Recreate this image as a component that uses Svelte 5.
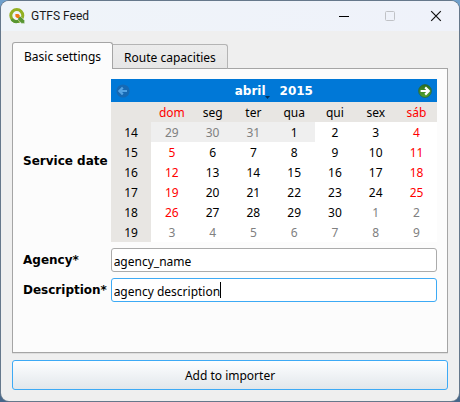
<script>
  const weekdays = ['dom', 'seg', 'ter', 'qua', 'qui', 'sex', 'sáb'];
  const firstWeek = 14;
  const start = new Date(2015, 2, 29);
  const weeks = Array.from({ length: 6 }, (_, w) => ({
    number: firstWeek + w,
    days: Array.from({ length: 7 }, (_, d) => {
      const date = new Date(start.getFullYear(), start.getMonth(), start.getDate() + w * 7 + d);
      return {
        day: date.getDate(),
        outside: date.getMonth() !== 3,
        weekend: d === 0 || d === 6,
        disabled: w === 0 && d < 4
      };
    })
  }));

  let tab = $state('basic');
  let agency = $state('agency_name');
  let description = $state('agency description');
</script>

<div class="desktop">
  <div class="window">
    <header class="titlebar">
      <svg class="logo" viewBox="0 0 16 16" aria-hidden="true">
        <circle cx="7.8" cy="7.6" r="6" fill="none" stroke="#93b023" stroke-width="3" />
        <path d="M2.7 11A6 6 0 0 0 9.5 13.3" fill="none" stroke="#589632" stroke-width="3" />
        <path d="M9.2 8.6h2.6l3.8 3.8v3h-3l-3.8-3.8z" fill="#589632" stroke="#f0f4f9" stroke-width=".5" />
        <path d="M6.4 6h3l1.6 1.7-1.2 2.2H8L6.4 8.6z" fill="#ee7913" />
      </svg>
      <span class="title">GTFS Feed</span>
      <button class="caption" aria-label="Minimize">
        <svg viewBox="0 0 12 12"><path d="M1 6.5h10" stroke="#000" /></svg>
      </button>
      <button class="caption" aria-label="Maximize" disabled>
        <svg viewBox="0 0 12 12"><rect x="1.5" y="1.5" width="9" height="9" rx="1" fill="none" stroke="#c0c2c6" /></svg>
      </button>
      <button class="caption" aria-label="Close">
        <svg viewBox="0 0 12 12"><path d="M1.2 1.2l9.6 9.6M10.8 1.2l-9.6 9.6" stroke="#111" stroke-width="1.2" /></svg>
      </button>
    </header>

    <main>
      <div class="tabs" role="tablist">
        <button class="tab" class:active={tab === 'basic'} role="tab" aria-selected={tab === 'basic'} onclick={() => (tab = 'basic')}>Basic settings</button>
        <button class="tab" class:active={tab === 'routes'} role="tab" aria-selected={tab === 'routes'} onclick={() => (tab = 'routes')}>Route capacities</button>
      </div>

      <div class="panel" role="tabpanel">
        {#if tab === 'basic'}
          <div class="form">
            <span class="label" id="service-date">Service date</span>
            <div class="calendar" role="group" aria-labelledby="service-date">
              <div class="nav">
                <button class="arrow" aria-label="Previous month">
                  <svg viewBox="0 0 14 14">
                    <circle cx="7" cy="7" r="6.6" fill="#1669b4" />
                    <path d="M11 7H4M6.8 3.6L3.4 7l3.4 3.4" fill="none" stroke="#54a3e4" stroke-width="2.2" />
                  </svg>
                </button>
                <div class="period">
                  <button class="month" aria-haspopup="menu">abril<svg class="drop" viewBox="0 0 5 3"><path d="M0 0h5L2.5 3z" fill="#06345f" /></svg></button>
                  <button>2015</button>
                </div>
                <button class="arrow" aria-label="Next month">
                  <svg viewBox="0 0 14 14">
                    <defs>
                      <linearGradient id="green" x1="0" y1="0" x2="0" y2="1">
                        <stop offset="0" stop-color="#2c6e20" />
                        <stop offset="1" stop-color="#55a52f" />
                      </linearGradient>
                    </defs>
                    <circle cx="7" cy="7" r="6.4" fill="url(#green)" stroke="#2b6330" stroke-width=".7" />
                    <path d="M2.6 7H10M7.2 3.4L10.8 7l-3.6 3.6" fill="none" stroke="#fff" stroke-width="2.2" />
                  </svg>
                </button>
              </div>
              <table>
                <thead>
                  <tr>
                    <th class="week"></th>
                    {#each weekdays as name, i}
                      <th class:weekend={i === 0 || i === 6}>{name}</th>
                    {/each}
                  </tr>
                </thead>
                <tbody>
                  {#each weeks as week}
                    <tr>
                      <th class="week">{week.number}</th>
                      {#each week.days as d}
                        <td class:weekend={d.weekend} class:outside={d.outside} class:disabled={d.disabled}>{d.day}</td>
                      {/each}
                    </tr>
                  {/each}
                </tbody>
              </table>
            </div>

            <label class="label" for="agency">Agency*</label>
            <input id="agency" type="text" bind:value={agency} />

            <label class="label" for="description">Description*</label>
            <div class="field">
              <input id="description" class="current" type="text" bind:value={description} />
              <span class="cursor" aria-hidden="true">{description}</span>
            </div>
          </div>
        {/if}
      </div>

      <button class="submit">Add to importer</button>
    </main>
  </div>
</div>

<style>
  .desktop {
    box-sizing: border-box;
    min-height: 100vh;
    padding: 1px;
    display: flex;
    background: linear-gradient(#6fa0cc, #46678a);
    font: 12px/16px 'Noto Sans', 'DejaVu Sans Condensed', sans-serif;
    color: #000;
  }
  .window {
    flex: 1;
    display: flex;
    flex-direction: column;
    background: #efefef;
    border-radius: 8px;
    box-shadow: 0 0 0 1px #66788b;
    overflow: hidden;
  }
  button {
    margin: 0;
    padding: 0;
    border: 0;
    background: none;
    font: inherit;
    color: inherit;
  }
  svg {
    display: block;
  }
  .titlebar {
    display: flex;
    align-items: center;
    height: 30px;
    padding-left: 8px;
    background: linear-gradient(90deg, #eff4f9, #eff2fa);
  }
  .logo {
    width: 16px;
    height: 16px;
    margin-right: 6px;
  }
  .title {
    flex: 1;
    font-family: Roboto, 'Open Sans', sans-serif;
    color: #1a1a1a;
  }
  .caption {
    width: 46px;
    height: 30px;
    display: grid;
    place-items: center;
  }
  .caption svg {
    width: 12px;
    height: 12px;
  }
  main {
    flex: 1;
    display: flex;
    flex-direction: column;
    padding: 11px;
  }
  .tabs {
    display: flex;
    align-items: flex-end;
    position: relative;
    z-index: 1;
    margin-bottom: -1px;
  }
  .tab {
    box-sizing: border-box;
    height: 25px;
    padding: 2px 11px 0;
    border: 1px solid #b4b4b4;
    border-left: 0;
    border-bottom-color: #a5a5a5;
    border-radius: 0 3px 0 0;
    background: linear-gradient(#ececec, #e6e6e6);
  }
  .tab.active {
    height: 27px;
    border: 1px solid #a5a5a5;
    border-bottom: 0;
    border-radius: 3px 3px 0 0;
    background: #fcfcfc;
  }
  .panel {
    flex: 1;
    border: 1px solid #a5a5a5;
    box-shadow: 0 1px 0 #dedede;
    background: #fcfcfc;
    padding: 10px;
  }
  .form {
    display: grid;
    grid-template-columns: auto 1fr;
    gap: 6px 3px;
    align-items: center;
  }
  .label {
    font-family: 'DejaVu Sans', sans-serif;
    font-weight: bold;
    white-space: nowrap;
  }
  .nav {
    display: flex;
    align-items: center;
    height: 23px;
    padding: 0 5px;
    background: #0078d7;
    color: #fff;
    font-family: 'DejaVu Sans', sans-serif;
    font-weight: bold;
  }
  .arrow svg {
    width: 14px;
    height: 14px;
  }
  .period {
    flex: 1;
    display: flex;
    justify-content: center;
    gap: 14px;
  }
  .month {
    position: relative;
  }
  .drop {
    position: absolute;
    right: -4px;
    bottom: 0;
    width: 5px;
    height: 3px;
  }
  table {
    width: 100%;
    table-layout: fixed;
    border-collapse: collapse;
    background: #fff;
  }
  th,
  td {
    box-sizing: border-box;
    height: 20px;
    padding: 2px 0 0;
    text-align: center;
    font-weight: normal;
  }
  thead th,
  .week {
    background: #e8e6e3;
  }
  .weekend {
    color: #f00;
  }
  .outside {
    color: #808080;
  }
  .disabled {
    background: #efefef;
  }
  input {
    box-sizing: border-box;
    display: block;
    width: 100%;
    height: 24px;
    padding: 2px 2px 0;
    border: 1px solid #ababab;
    border-radius: 3px;
    background: #fff;
    font: inherit;
    color: inherit;
    outline: none;
  }
  input.current,
  input:focus {
    border-color: #3daaf5;
  }
  .field {
    position: relative;
  }
  .cursor {
    position: absolute;
    left: 3px;
    top: 4px;
    border-right: 1px solid #000;
    color: transparent;
    white-space: pre;
    pointer-events: none;
  }
  .submit {
    height: 30px;
    margin-top: 7px;
    padding-top: 2px;
    border: 1px solid #3daaf5;
    border-radius: 3px;
    background: linear-gradient(#fdfeff, #e2e7eb);
  }
</style>
